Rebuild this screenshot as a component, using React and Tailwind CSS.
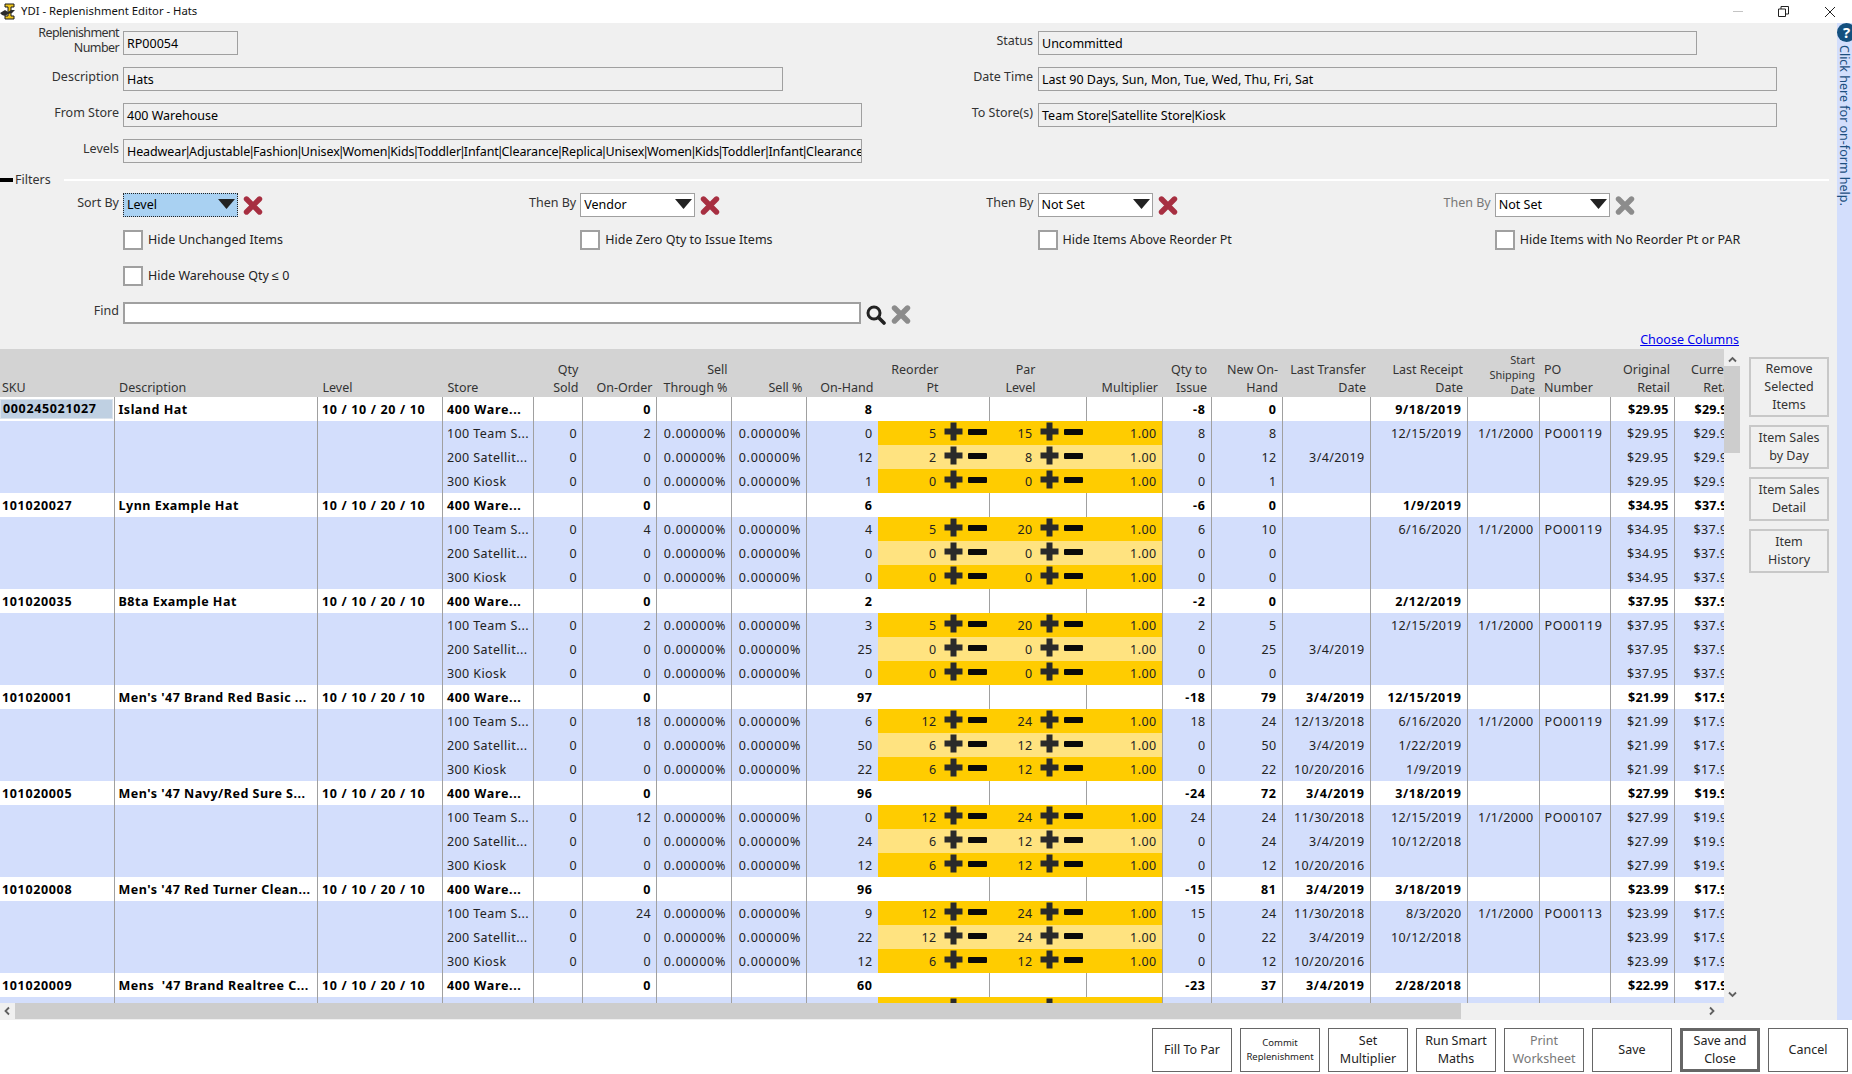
import React from "react";

const font = "font-['Noto_Sans',sans-serif]";

const columns = [
  114, 203.5, 125, 91, 49, 74, 75, 75, 71, 112, 97, 75.5, 49, 71, 88, 97, 72, 71, 64, 66,
];

const groups = [
  {
    sku: "000245021027",
    name: "Island Hat",
    total: ["0", "8", "-8", "0", "", "9/18/2019", "$29.95", "$29.95"],
    price: ["$29.95", "$29.95"],
    stores: [
      ["0", "2", "0", "5", "15", "8", "8", "", "12/15/2019", "1/1/2000", "PO00119"],
      ["0", "0", "12", "2", "8", "0", "12", "3/4/2019", "", "", ""],
      ["0", "0", "1", "0", "0", "0", "1", "", "", "", ""],
    ],
  },
  {
    sku: "101020027",
    name: "Lynn Example Hat",
    total: ["0", "6", "-6", "0", "", "1/9/2019", "$34.95", "$37.95"],
    price: ["$34.95", "$37.95"],
    stores: [
      ["0", "4", "4", "5", "20", "6", "10", "", "6/16/2020", "1/1/2000", "PO00119"],
      ["0", "0", "0", "0", "0", "0", "0", "", "", "", ""],
      ["0", "0", "0", "0", "0", "0", "0", "", "", "", ""],
    ],
  },
  {
    sku: "101020035",
    name: "B8ta Example Hat",
    total: ["0", "2", "-2", "0", "", "2/12/2019", "$37.95", "$37.95"],
    price: ["$37.95", "$37.95"],
    stores: [
      ["0", "2", "3", "5", "20", "2", "5", "", "12/15/2019", "1/1/2000", "PO00119"],
      ["0", "0", "25", "0", "0", "0", "25", "3/4/2019", "", "", ""],
      ["0", "0", "0", "0", "0", "0", "0", "", "", "", ""],
    ],
  },
  {
    sku: "101020001",
    name: "Men's '47 Brand Red Basic ...",
    total: ["0", "97", "-18", "79", "3/4/2019", "12/15/2019", "$21.99", "$17.99"],
    price: ["$21.99", "$17.99"],
    stores: [
      ["0", "18", "6", "12", "24", "18", "24", "12/13/2018", "6/16/2020", "1/1/2000", "PO00119"],
      ["0", "0", "50", "6", "12", "0", "50", "3/4/2019", "1/22/2019", "", ""],
      ["0", "0", "22", "6", "12", "0", "22", "10/20/2016", "1/9/2019", "", ""],
    ],
  },
  {
    sku: "101020005",
    name: "Men's '47 Navy/Red Sure S...",
    total: ["0", "96", "-24", "72", "3/4/2019", "3/18/2019", "$27.99", "$19.99"],
    price: ["$27.99", "$19.99"],
    stores: [
      ["0", "12", "0", "12", "24", "24", "24", "11/30/2018", "12/15/2019", "1/1/2000", "PO00107"],
      ["0", "0", "24", "6", "12", "0", "24", "3/4/2019", "10/12/2018", "", ""],
      ["0", "0", "12", "6", "12", "0", "12", "10/20/2016", "", "", ""],
    ],
  },
  {
    sku: "101020008",
    name: "Men's '47 Red Turner Clean...",
    total: ["0", "96", "-15", "81", "3/4/2019", "3/18/2019", "$23.99", "$17.99"],
    price: ["$23.99", "$17.99"],
    stores: [
      ["0", "24", "9", "12", "24", "15", "24", "11/30/2018", "8/3/2020", "1/1/2000", "PO00113"],
      ["0", "0", "22", "12", "24", "0", "22", "3/4/2019", "10/12/2018", "", ""],
      ["0", "0", "12", "6", "12", "0", "12", "10/20/2016", "", "", ""],
    ],
  },
  {
    sku: "101020009",
    name: "Mens  '47 Brand Realtree C...",
    total: ["0", "60", "-23", "37", "3/4/2019", "2/28/2018", "$22.99", "$17.99"],
    price: ["$22.99", "$17.99"],
    stores: [["0", "0", "0", "0", "0", "0", "0", "", "", "", ""]],
  },
];

const storeNames = ["100 Team S...", "200 Satellit...", "300 Kiosk"];

const Logo = () => (
  <svg width="16" height="17" viewBox="0 0 16 17">
    <path d="M5 1h9v3h-3v9h3v3H5v-3h3V4H5z" fill="#eec51c" stroke="#1a1a1a" strokeWidth="1" />
    <path d="M0 10l5-3 3 2 3-2 4 0-3 3-4 1-3 2-3-1z" fill="#2b2b2b" />
  </svg>
);

const PlusIcon = () => (
  <svg width="19" height="19" viewBox="0 0 19 19" className="shrink-0 -mt-[3px]">
    <path d="M6.5 0.5h6v6h6v6h-6v6h-6v-6h-6v-6h6z" fill="#2a2a2a" />
  </svg>
);

const MinusIcon = () => (
  <svg width="19" height="6" viewBox="0 0 19 6" className="shrink-0 -mt-[3px]">
    <rect width="19" height="6" rx="1" fill="#0a0a0a" />
  </svg>
);

const CrossIcon = ({ color }) => (
  <svg width="20" height="19" viewBox="0 0 20 19" className="shrink-0">
    <path d="M3.5 3l13 13M16.5 3l-13 13" stroke={color} strokeWidth="5.4" strokeLinecap="round" />
  </svg>
);

const Arrow = ({ d, className }) => (
  <svg width="9" height="7" viewBox="0 0 9 7" className={className}>
    <path d={d} fill="none" stroke="#606060" strokeWidth="1.8" />
  </svg>
);

const Label = ({ children, className = "" }) => (
  <div className={`text-right text-[12.5px] leading-[17px] text-[#333] ${className}`}>{children}</div>
);

// the pipes in these values are much thinner in the app's font
const Piped = ({ value }) =>
  value.split("|").map((part, i) => (
    <React.Fragment key={i}>
      {i > 0 && <span className="-mx-[2px]">|</span>}
      {part}
    </React.Fragment>
  ));

const ReadField = ({ value, width, className = "" }) => (
  <div
    className={`h-6 border border-[#a0a0a0] bg-[#f0f0f0] pl-[3px] pt-[2px] text-[12.5px] leading-[20px] text-black whitespace-nowrap overflow-hidden ${width} ${className}`}
  >
    <Piped value={value} />
  </div>
);

const Select = ({ value, focused }) => (
  <div
    className={`flex h-6 w-[115px] items-center justify-between pl-[3px] pr-[1px] text-[12.5px] ${
      focused
        ? "border border-dotted border-[#222] bg-[#a9d1f2]"
        : "border border-[#a0a0a0] bg-white"
    }`}
  >
    <span className="pt-[1px]">{value}</span>
    <svg width="18" height="12" viewBox="0 0 18 12" className="-mt-[2px]">
      <path d="M0 1h17l-8.5 10z" fill="#222" />
    </svg>
  </div>
);

const SortFilter = ({ label, value, focused, disabled }) => (
  <div className="flex items-start">
    <Label className={`w-[119px] pt-[1px] ${disabled ? "!text-[#777]" : ""}`}>{label}</Label>
    <div className="ml-1">
      <Select value={value} focused={focused} />
    </div>
    <div className="ml-[5px] mt-[3px]">
      <CrossIcon color={disabled ? "#8c8c8c" : "#a72f41"} />
    </div>
  </div>
);

const Check = ({ label }) => (
  <div className="ml-[123px] flex items-center gap-[5px]">
    <div className="h-5 w-5 border-2 border-[#a0a0a0] bg-white" />
    <span className="text-[12.5px] text-[#222]">{label}</span>
  </div>
);

const Head = ({ children, right, style = "" }) => (
  <th
    className={`align-bottom font-normal text-[12.5px] leading-[18px] text-[#333] ${
      right ? "text-right" : "text-left"
    } ${style}`}
  >
    {children}
  </th>
);

const Yellow = ({ value, bg, pad }) => (
  <td className={`!p-0 ${bg}`}>
    <div className={`flex h-6 items-center justify-end ${pad}`}>
      <span className="mr-[7px] pt-[1px]">{value}</span>
      <PlusIcon />
      <span className="ml-[5px]">
        <MinusIcon />
      </span>
    </div>
  </td>
);

const cell = "border-l border-[#a0a0a0] px-[5px] text-right whitespace-nowrap overflow-hidden";
const plainCell = "px-[5px] text-right whitespace-nowrap overflow-hidden";

const TotalRow = ({ group, first }) => {
  const t = group.total;
  return (
    <tr className="h-6 bg-white font-bold text-black tracking-[0.65px] [&>td]:pt-[1px]">
      <td className={first ? "!p-0" : "pl-[2px] !pr-0"}>
        {first ? (
          <div className="h-[20px] w-[113px] border border-[#dbe3ec] bg-[#bfd0e2] pl-[2px] leading-[18px]">
            {group.sku}
          </div>
        ) : (
          group.sku
        )}
      </td>
      <td className="border-l border-[#a0a0a0] pl-[4px] tracking-[0.5px] whitespace-pre overflow-hidden">{group.name}</td>
      <td className="border-l border-[#a0a0a0] pl-[4px]">10 / 10 / 20 / 10</td>
      <td className="border-l border-[#a0a0a0] pl-[4px] whitespace-nowrap">400 Ware...</td>
      <td className={cell} />
      <td className={cell}>{t[0]}</td>
      <td className={cell} />
      <td className={cell} />
      <td className={cell}>{t[1]}</td>
      <td />
      <td className="border-l border-[#a0a0a0]" />
      <td className="border-l border-[#a0a0a0]" />
      <td className={cell}>{t[2]}</td>
      <td className={cell}>{t[3]}</td>
      <td className={cell}>{t[4]}</td>
      <td className={cell}>{t[5]}</td>
      <td className={cell} />
      <td className={cell} />
      <td className={`${cell} tracking-[0.2px]`}>{t[6]}</td>
      <td className={`${cell} tracking-[0.2px]`}>{t[7]}</td>
    </tr>
  );
};

const StoreRow = ({ row, name, price, index }) => {
  const bg = index === 1 ? "bg-[#ffe380]" : "bg-[#ffcc00]";
  return (
    <tr className="h-6 bg-[#d3defc] text-[#222] tracking-[0.4px] [&>td]:pt-[1px]">
      <td />
      <td className="border-l border-[#a0a0a0]" />
      <td className="border-l border-[#a0a0a0]" />
      <td className="border-l border-[#a0a0a0] pl-[4px] whitespace-nowrap overflow-hidden">{name}</td>
      <td className={cell}>{row[0]}</td>
      <td className={cell}>{row[1]}</td>
      <td className={`${cell} tracking-[0.7px]`}>0.00000%</td>
      <td className={`${cell} tracking-[0.7px]`}>0.00000%</td>
      <td className={cell}>{row[2]}</td>
      <Yellow value={row[3]} bg={bg} pad="pr-[3px]" />
      <Yellow value={row[4]} bg={bg} pad="pr-[4px]" />
      <td className={`${plainCell} ${bg}`}>1.00</td>
      <td className={cell}>{row[5]}</td>
      <td className={cell}>{row[6]}</td>
      <td className={cell}>{row[7]}</td>
      <td className={cell}>{row[8]}</td>
      <td className={cell}>{row[9]}</td>
      <td className="border-l border-[#a0a0a0] pl-[5px] tracking-[0.7px] whitespace-nowrap">{row[10]}</td>
      <td className={cell}>{price[0]}</td>
      <td className={cell}>{price[1]}</td>
    </tr>
  );
};

const ReplenishTable = () => (
  <table className="table-fixed border-collapse text-[12.5px] leading-[18px] w-[1735px]">
    <colgroup>
      {columns.map((w, i) => (
        <col key={i} style={{ width: w }} />
      ))}
    </colgroup>
    <thead>
      <tr className="h-12 bg-[#d3d3d3]">
        <Head style="pl-[2px]">SKU</Head>
        <Head style="pl-[5px]">Description</Head>
        <Head style="pl-[5px]">Level</Head>
        <Head style="pl-[5px]">Store</Head>
        <Head right style="pr-1">Qty<br />Sold</Head>
        <Head right style="pr-1">On-Order</Head>
        <Head right style="pr-1">Sell<br />Through %</Head>
        <Head right style="pr-1">Sell %</Head>
        <Head right style="pr-1">On-Hand</Head>
        <Head right style="pr-[51px]">Reorder<br />Pt</Head>
        <Head right style="pr-[51px]">Par<br />Level</Head>
        <Head right style="pr-1">Multiplier</Head>
        <Head right style="pr-1">Qty to<br />Issue</Head>
        <Head right style="pr-1">New On-<br />Hand</Head>
        <Head right style="pr-1">Last Transfer<br />Date</Head>
        <Head right style="pr-1">Last Receipt<br />Date</Head>
        <Head right style="pr-1"><span className="block text-[11px] leading-[15px]">Start<br />Shipping<br />Date</span></Head>
        <Head style="pl-[5px]">PO<br />Number</Head>
        <Head right style="pr-1">Original<br />Retail</Head>
        <Head right style="pr-1">Current<br />Retail</Head>
      </tr>
    </thead>
    <tbody>
      {groups.map((group, i) => (
        <React.Fragment key={group.sku}>
          <TotalRow group={group} first={i === 0} />
          {group.stores.map((row, j) => (
            <StoreRow key={j} row={row} name={storeNames[j]} price={group.price} index={j} />
          ))}
        </React.Fragment>
      ))}
    </tbody>
  </table>
);

const SideButton = ({ children, height }) => (
  <button className={`w-20 border-2 border-[#c8c8c8] bg-[#f0f0f0] text-center text-[12.5px] leading-[18px] text-[#333] ${height}`}>
    {children}
  </button>
);

const FooterButton = ({ children, className = "" }) => (
  <button className={`h-11 w-20 border border-[#666] bg-white text-center text-[12.5px] leading-[18px] text-[#222] ${className}`}>
    {children}
  </button>
);

const App = () => {
  return (
    <div className={`flex h-[1074px] w-[1852px] flex-col overflow-hidden bg-white ${font}`}>
      {/* title bar */}
      <div className="flex h-[23px] shrink-0 items-center">
        <Logo />
        <span className="ml-[5px] text-[11.3px] text-[#111]">YDI - Replenishment Editor - Hats</span>
        <div className="ml-auto flex items-center">
          <div className="mr-[35px] h-px w-[10px] bg-[#c4c4c4]" />
          <svg width="11" height="11" viewBox="0 0 11 11" className="mr-[35px]">
            <path d="M0.5 3h7v7.5h-7zM3 3V0.5h7.5V8H7.5" fill="none" stroke="#222" />
          </svg>
          <svg width="12" height="12" viewBox="0 0 12 12" className="mr-[16px]">
            <path d="M1 1l10 10M11 1L1 11" stroke="#222" strokeWidth="1" />
          </svg>
        </div>
      </div>

      <div className="flex h-[997px] shrink-0">
        <div className="flex w-[1837px] flex-col bg-[#f0f0f0]">
          {/* header fields */}
          <div className="h-[326px] shrink-0 pt-2">
            <div className="grid grid-cols-[119px_740px_174px_1fr] gap-y-3">
              <Label className="-mt-[6px] !leading-[15px] tracking-[-0.6px]">Replenishment<br />Number</Label>
              <div className="ml-1"><ReadField value="RP00054" width="w-[115px]" /></div>
              <Label className="pt-[1px]">Status</Label>
              <div className="ml-[5px]"><ReadField value="Uncommitted" width="w-[659px]" /></div>

              <Label className="pt-[1px]">Description</Label>
              <div className="ml-1"><ReadField value="Hats" width="w-[660px]" /></div>
              <Label className="pt-[1px]">Date Time</Label>
              <div className="ml-[5px]"><ReadField value="Last 90 Days, Sun, Mon, Tue, Wed, Thu, Fri, Sat" width="w-[739px]" /></div>

              <Label className="pt-[1px]">From Store</Label>
              <div className="ml-1"><ReadField value="400 Warehouse" width="w-[739px]" /></div>
              <Label className="pt-[1px]">To Store(s)</Label>
              <div className="ml-[5px]"><ReadField value="Team Store|Satellite Store|Kiosk" width="w-[739px]" /></div>

              <Label className="pt-[1px]">Levels</Label>
              <div className="ml-1">
                <ReadField
                  value="Headwear|Adjustable|Fashion|Unisex|Women|Kids|Toddler|Infant|Clearance|Replica|Unisex|Women|Kids|Toddler|Infant|Clearance"
                  width="w-[739px]"
                  className="tracking-[-0.1px]"
                />
              </div>
            </div>

            {/* filters */}
            <div className="mt-[5px] flex h-[24px] w-[1829px] items-center">
              <div className="h-1 w-[13px] bg-black" />
              <span className="ml-[2px] pt-[1px] text-[12.5px] text-[#333]">Filters</span>
              <div className="ml-[13px] h-[2px] flex-1 bg-white" />
            </div>

            <div className="mt-[1px] grid w-[1829px] grid-cols-4 gap-y-[13px]">
              <SortFilter label="Sort By" value="Level" focused />
              <SortFilter label="Then By" value="Vendor" />
              <SortFilter label="Then By" value="Not Set" />
              <SortFilter label="Then By" value="Not Set" disabled />
              <Check label="Hide Unchanged Items" />
              <Check label="Hide Zero Qty to Issue Items" />
              <Check label="Hide Items Above Reorder Pt" />
              <Check label="Hide Items with No Reorder Pt or PAR" />
            </div>

            <div className="mt-4">
              <Check label="Hide Warehouse Qty ≤ 0" />
            </div>

            <div className="mt-4 flex items-start">
              <Label className="w-[119px]">Find</Label>
              <div className="ml-1 h-[22px] w-[738px] border-2 border-[#a0a0a0] bg-white" />
              <svg width="20" height="20" viewBox="0 0 20 20" className="ml-[5px] mt-[3px]">
                <circle cx="8" cy="8" r="6" fill="none" stroke="#222" strokeWidth="3" />
                <path d="M12.5 12.5L18 18" stroke="#222" strokeWidth="3.6" strokeLinecap="round" />
              </svg>
              <div className="ml-[5px] mt-[3px]">
                <CrossIcon color="#8c8c8c" />
              </div>
            </div>
          </div>

          <div className="flex h-[0px] justify-end pr-[98px]">
            <a className="-mt-[18px] h-[18px] text-[12.5px] leading-[18px] text-[#0000ee] underline">Choose Columns</a>
          </div>

          {/* grid + side buttons */}
          <div className="flex h-[654px] shrink-0">
            <div className="w-[1724px] shrink-0 overflow-hidden bg-[#d3defc]">
              <ReplenishTable />
            </div>
            <div className="flex h-full w-4 shrink-0 flex-col items-center pt-[7px]">
              <Arrow d="M1 5.5l3.5-3.5 3.5 3.5" />
              <div className="mt-[3px] h-[87px] w-full bg-[#cdcdcd]" />
              <Arrow d="M1 1.5l3.5 3.5 3.5-3.5" className="mt-auto mb-[5px]" />
            </div>
            <div className="ml-[9px] flex flex-col gap-2 pt-2">
              <SideButton height="h-[60px]">Remove<br />Selected<br />Items</SideButton>
              <SideButton height="h-11">Item Sales<br />by Day</SideButton>
              <SideButton height="h-11">Item Sales<br />Detail</SideButton>
              <SideButton height="h-11">Item<br />History</SideButton>
            </div>
          </div>

          {/* horizontal scrollbar */}
          <div className="flex h-4 w-[1724px] shrink-0 items-center">
            <svg width="15" height="16" viewBox="0 0 15 16" className="shrink-0">
              <path d="M9 4.5L5.5 8 9 11.5" fill="none" stroke="#606060" strokeWidth="1.8" />
            </svg>
            <div className="h-full w-[1446px] bg-[#cdcdcd]" />
            <svg width="16" height="16" viewBox="0 0 16 16" className="ml-auto mr-1 shrink-0">
              <path d="M6 4.5L9.5 8 6 11.5" fill="none" stroke="#606060" strokeWidth="1.8" />
            </svg>
          </div>
        </div>

        {/* help strip */}
        <div className="relative w-[15px] shrink-0 bg-[#d3defc]">
          <div className="absolute left-0 top-0 flex h-[19px] w-[19px] items-center justify-center rounded-full bg-[#14507e] text-[15px] font-bold leading-none text-white">
            ?
          </div>
          <div className="absolute left-[14px] top-[22px] origin-top-left rotate-90 whitespace-nowrap text-[12.5px] leading-[14px] text-[#1c4f80]">
            Click here for on-form help.
          </div>
        </div>
      </div>

      {/* footer buttons */}
      <div className="flex justify-end gap-2 pr-1 pt-[8px]">
        <FooterButton>Fill To Par</FooterButton>
        <FooterButton className="!text-[9.5px] !leading-[14px]">Commit<br />Replenishment</FooterButton>
        <FooterButton>Set<br />Multiplier</FooterButton>
        <FooterButton>Run Smart<br />Maths</FooterButton>
        <FooterButton className="!text-[#777]">Print<br />Worksheet</FooterButton>
        <FooterButton>Save</FooterButton>
        <FooterButton className="border-[3px]">Save and<br />Close</FooterButton>
        <FooterButton>Cancel</FooterButton>
      </div>
    </div>
  );
};

export default App;
